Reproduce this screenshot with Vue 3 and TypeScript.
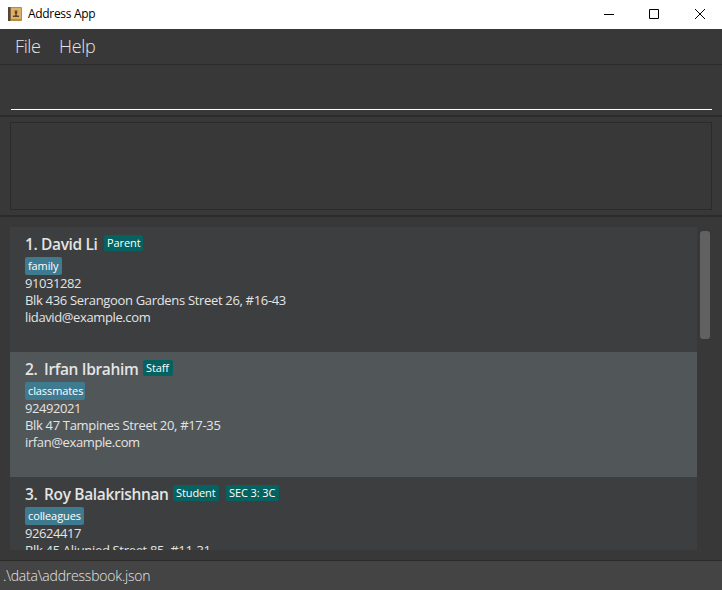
<script setup lang="ts">
interface Person {
  name: string
  roles: string[]
  tag: string
  phone: string
  address: string
  email?: string
}

const people: Person[] = [
  { name: 'David Li', roles: ['Parent'], tag: 'family', phone: '91031282', address: 'Blk 436 Serangoon Gardens Street 26, #16-43', email: 'lidavid@example.com' },
  { name: 'Irfan Ibrahim', roles: ['Staff'], tag: 'classmates', phone: '92492021', address: 'Blk 47 Tampines Street 20, #17-35', email: 'irfan@example.com' },
  { name: 'Roy Balakrishnan', roles: ['Student', 'SEC 3: 3C'], tag: 'colleagues', phone: '92624417', address: 'Blk 45 Aljunied Street 85, #11-31' },
]
</script>

<template>
  <div class="window">
    <header class="titlebar">
      <svg class="app-icon" width="14" height="14" viewBox="0 0 14 14">
        <rect width="14" height="14" rx="1" fill="#b98b43" />
        <rect x="3" y="1" width="10" height="11" fill="#ddb065" />
        <rect width="2.5" height="14" rx=".5" fill="#54443d" />
        <path d="M6.700 3.500h2.600v2.700L8.700 7v1.200l2.300.5V10H5V8.700l2.300-.5V7l-.6-.8z" fill="#594631" />
      </svg>
      <span class="title">Address App</span>
      <svg class="controls" width="106" height="14" viewBox="0 0 106 14" fill="none" stroke="#000" stroke-width="1">
        <path d="M1 7.500h10M46.500 2.500h9v9h-9zM92 2l10 10M102 2l-10 10" />
      </svg>
    </header>
    <nav class="menu"><span class="file">File</span><span class="help">Help</span></nav>
    <section class="command"><div class="input"></div></section>
    <section class="result"><div class="output"></div></section>
    <main class="body">
      <div class="list">
        <article v-for="(p, i) in people" :key="p.name" class="card">
          <div class="head">
            <span class="num" :class="`d${i}`">{{ i + 1 }}.</span>
            <span class="name" :class="`n${i}`">{{ p.name }}</span>
            <span v-for="(r, j) in p.roles" :key="r" class="role" :class="`r${i}${j}`">{{ r }}</span>
          </div>
          <div class="tag" :class="`t${i}`">{{ p.tag }}</div>
          <div class="line phone">{{ p.phone }}</div>
          <div class="line">{{ p.address }}</div>
          <div v-if="p.email" class="line email">{{ p.email }}</div>
        </article>
      </div>
      <div class="thumb"></div>
    </main>
    <footer class="status">.\data\addressbook.json</footer>
  </div>
</template>

<style>
body { margin: 0; overflow: hidden; }
</style>
<style scoped>
.window { box-sizing: border-box; width: 722px; height: 590px; display: flex; flex-direction: column; background: #383838; color: #e4e4e4; font-family: "Open Sans", "Noto Sans", sans-serif; white-space: nowrap; overflow: hidden; }
.window * { box-sizing: border-box; }
.titlebar { height: 29px; flex: none; display: flex; align-items: center; padding: 0 13px 2px 8px; background: #fff; color: #000; }
.app-icon { display: block; }
.title { margin-left: 6px; font-size: 12px; line-height: 18px; letter-spacing: -.32px; padding-top: 1px; }
.controls { margin-left: auto; display: block; }
.menu { height: 36px; flex: none; display: flex; padding-left: 15px; gap: 18px; border-bottom: 1px solid #2b2b2b; font-size: 18px; font-weight: 300; line-height: 35px; }
.file { width: 26px; letter-spacing: -.4px; }
.help { letter-spacing: -.3px; }
.command { height: 52px; flex: none; padding: 10px 10px 0 11px; border-bottom: 2px solid #2b2b2b; }
.input { height: 35px; border-bottom: 1px solid #fff; }
.result { height: 100px; flex: none; padding: 5px 10px 0; border-bottom: 2px solid #2b2b2b; }
.output { height: 88px; border: 1px solid #2b2b2b; }
.body { height: 343px; flex: none; display: flex; padding: 10px 12px 10px 10px; gap: 3px; }
.list { width: 687px; height: 323px; overflow: hidden; }
.card { height: 125px; padding: 8px 15px 0; background: #3c3e3f; }
.card:nth-child(even) { background: #515658; }
.head { display: flex; height: 22px; align-items: flex-start; }
.num, .name { flex: none; font-size: 15.500px; font-weight: 600; line-height: 18px; letter-spacing: -.35px; }
.num { width: 19px; }
.num.d0 { width: 16px; }
.n0 { width: 63px; }
.n1 { width: 99px; }
.n2 { width: 129px; }
.role { height: 16px; border-radius: 2px; background: #066260; padding: 0 3px; font-size: 11px; line-height: 15px; letter-spacing: -.1px; color: #fff; width: 39px; }
.r10 { width: 30px; }
.r20 { width: 46px; margin-right: 7px; }
.r21 { width: 53px; }
.tag { width: 37px; height: 18px; border-radius: 2px; background: #3e7b91; padding: 0 3px; font-size: 11px; line-height: 18px; letter-spacing: -.1px; color: #fff; }
.t1 { width: 60px; }
.t2 { width: 59px; }
.line { height: 17px; font-size: 13px; line-height: 17px; letter-spacing: -.325px; }
.phone { letter-spacing: -.42px; }
.email { letter-spacing: -.38px; }
.thumb { width: 10px; height: 108px; margin-top: 4px; border-radius: 3px; background: #616161; }
.status { height: 30px; flex: none; border-top: 1px solid #2b2b2b; background: #444; padding-left: 3px; font-size: 14px; font-weight: 300; line-height: 29px; letter-spacing: -.2px; }
</style>
